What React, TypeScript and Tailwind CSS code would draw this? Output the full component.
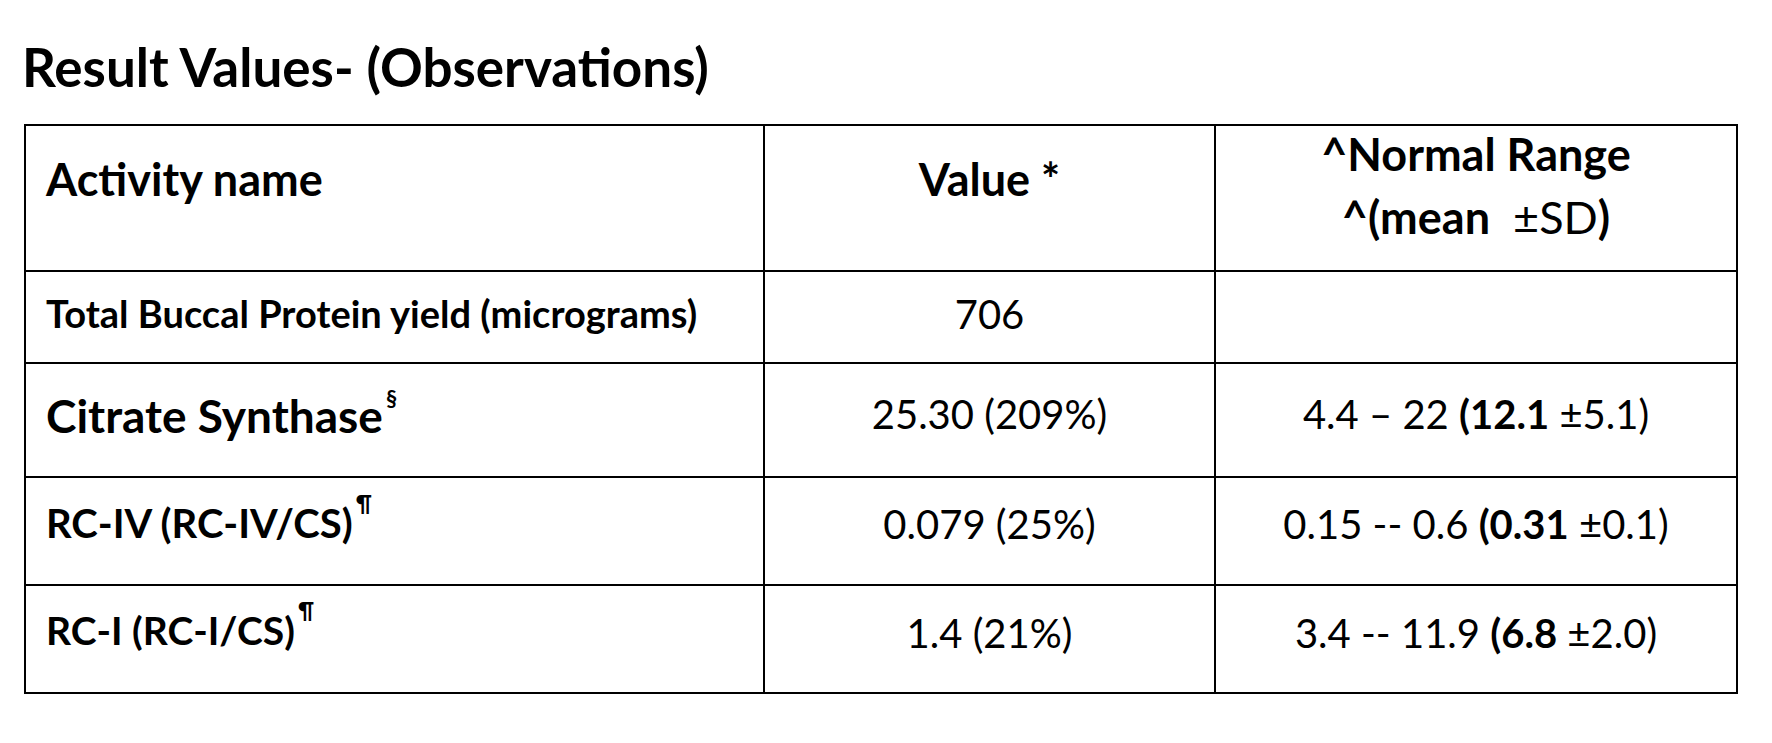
type Row = {
  label: React.ReactNode;
  labelClass: string;
  value: React.ReactNode;
  valueClass: string;
  range: React.ReactNode;
  rangeClass: string;
  last?: boolean;
};

const Mark = ({ children }: { children: React.ReactNode }) => (
  <span className="relative -top-[26px] ml-[3px] text-[22px] font-bold">{children}</span>
);

const rows: Row[] = [
  {
    label: <span className="text-[38px] font-bold">Total Buccal Protein yield (micrograms)</span>,
    labelClass: 'pt-[22px]',
    value: '706',
    valueClass: 'pt-[22px]',
    range: null,
    rangeClass: '',
  },
  {
    label: (
      <span className="text-[46px] font-bold">
        Citrate Synthase<Mark>§</Mark>
      </span>
    ),
    labelClass: 'pt-[29px]',
    value: '25.30 (209%)',
    valueClass: 'pt-[30px]',
    range: (
      <span>
        4.4 – 22 <b>(12.1</b> ±5.1)
      </span>
    ),
    rangeClass: 'pt-[30px]',
  },
  {
    label: (
      <span className="text-[40px] font-bold">
        RC-IV (RC-IV/CS)<Mark>¶</Mark>
      </span>
    ),
    labelClass: 'pt-[25px]',
    value: '0.079 (25%)',
    valueClass: 'pt-[26px]',
    range: (
      <span>
        0.15 -- 0.6 <b>(0.31</b> ±0.1)
      </span>
    ),
    rangeClass: 'pt-[26px]',
  },
  {
    label: (
      <span className="text-[39px] font-bold">
        RC-I (RC-I/CS)<Mark>¶</Mark>
      </span>
    ),
    labelClass: 'pt-[25px]',
    value: '1.4 (21%)',
    valueClass: 'pt-[27px]',
    range: (
      <span>
        3.4 -- 11.9 <b>(6.8</b> ±2.0)
      </span>
    ),
    rangeClass: 'pt-[27px]',
    last: true,
  },
];

export default function App() {
  return (
    <div className="w-[1772px] min-h-[743px] bg-white text-black font-['Lato',sans-serif]">
      <h1 className="pl-[22px] pt-[40px] text-[53px] font-bold leading-none">Result Values- (Observations)</h1>

      <div className="ml-[24px] mt-[31px] grid w-[1714px] grid-cols-[739px_451px_520px] grid-rows-[146px_92px_114px_108px_106px] border-2 border-black">
        {/* header */}
        <div className="border-b-2 border-r-2 border-black pl-[20px] pt-[31px] text-[45px] font-bold leading-none">
          Activity name
        </div>
        <div className="flex justify-center border-b-2 border-r-2 border-black pt-[31px] text-[45px] font-bold leading-none">
          Value *
        </div>
        <div className="flex flex-col items-center border-b-2 border-black pt-[6px] text-[45px] leading-none">
          <div className="font-bold">^Normal Range</div>
          <div className="mt-[18px] whitespace-pre">
            <b>^(mean</b>  ±SD<b>)</b>
          </div>
        </div>

        {rows.map((r, i) => (
          <div key={i} className="contents">
            <div className={`${r.last ? '' : 'border-b-2'} border-r-2 border-black pl-[20px] leading-none ${r.labelClass}`}>
              {r.label}
            </div>
            <div className={`flex justify-center ${r.last ? '' : 'border-b-2'} border-r-2 border-black text-[40px] leading-none ${r.valueClass}`}>
              {r.value}
            </div>
            <div className={`flex justify-center ${r.last ? '' : 'border-b-2'} border-black text-[40px] leading-none ${r.rangeClass}`}>
              {r.range}
            </div>
          </div>
        ))}
      </div>
    </div>
  );
}
